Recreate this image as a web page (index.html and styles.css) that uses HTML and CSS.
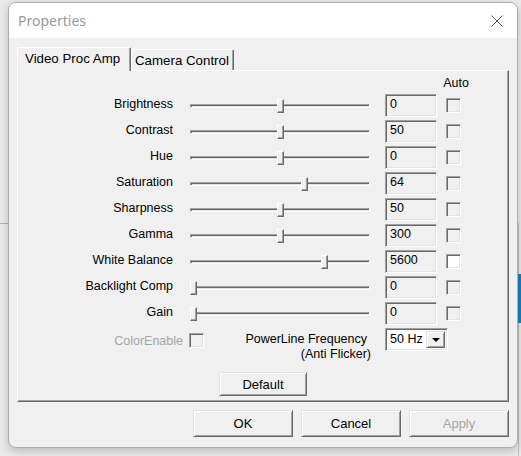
FILE: index.html
```html
<!DOCTYPE html>
<html>
<head>
<meta charset="utf-8">
<link rel="stylesheet" href="styles.css">
</head>
<body>
<div class="bg-line"></div>
<div class="bg-edge"></div>
<div class="bg-blue"></div>
<div class="dialog">
  <div class="titlebar">
    <span class="title">Properties</span>
    <svg class="close" viewBox="0 0 12 12" width="12" height="12"><path d="M0.5 0.5 L11.5 11.5 M11.5 0.5 L0.5 11.5" stroke="#555" stroke-width="1" fill="none"/></svg>
  </div>
  <div class="client">
    <div class="tabs">
      <div class="tab active">Video Proc Amp</div>
      <div class="tab inactive">Camera Control</div>
    </div>
    <div class="panel">
      <div class="grid">
        <div class="auto-head">Auto</div>

        <div class="label">Brightness</div>
        <div class="slider"><div class="track"></div><div class="thumb" style="--v:0.503"></div></div>
        <div class="value">0</div>
        <div class="check"></div>

        <div class="label">Contrast</div>
        <div class="slider"><div class="track"></div><div class="thumb" style="--v:0.503"></div></div>
        <div class="value">50</div>
        <div class="check"></div>

        <div class="label">Hue</div>
        <div class="slider"><div class="track"></div><div class="thumb" style="--v:0.503"></div></div>
        <div class="value">0</div>
        <div class="check"></div>

        <div class="label">Saturation</div>
        <div class="slider"><div class="track"></div><div class="thumb" style="--v:0.64"></div></div>
        <div class="value">64</div>
        <div class="check"></div>

        <div class="label">Sharpness</div>
        <div class="slider"><div class="track"></div><div class="thumb" style="--v:0.503"></div></div>
        <div class="value">50</div>
        <div class="check"></div>

        <div class="label">Gamma</div>
        <div class="slider"><div class="track"></div><div class="thumb" style="--v:0.503"></div></div>
        <div class="value">300</div>
        <div class="check"></div>

        <div class="label">White Balance</div>
        <div class="slider"><div class="track"></div><div class="thumb" style="--v:0.76"></div></div>
        <div class="value">5600</div>
        <div class="check enabled"></div>

        <div class="label">Backlight Comp</div>
        <div class="slider"><div class="track"></div><div class="thumb" style="--v:0"></div></div>
        <div class="value">0</div>
        <div class="check"></div>

        <div class="label">Gain</div>
        <div class="slider"><div class="track"></div><div class="thumb" style="--v:0"></div></div>
        <div class="value">0</div>
        <div class="check"></div>
      </div>

      <div class="extras">
        <div class="color-enable">
          <span class="disabled-text">ColorEnable</span>
          <div class="check small"></div>
        </div>
        <div class="powerline">
          <div class="pl-line1">PowerLine Frequency</div>
          <div>(Anti Flicker)</div>
        </div>
        <div class="combo">
          <span class="combo-text">50 Hz</span>
          <span class="combo-btn"><span class="arrow"></span></span>
        </div>
      </div>

      <div class="default-row">
        <button class="btn default">Default</button>
      </div>
    </div>
    <div class="actions">
      <button class="btn action">OK</button>
      <button class="btn action">Cancel</button>
      <button class="btn action disabled">Apply</button>
    </div>
  </div>
</div>
</body>
</html>
```

FILE: styles.css
```css
* { box-sizing: border-box; }
html, body { margin: 0; padding: 0; }
body {
  width: 521px;
  height: 456px;
  overflow: hidden;
  position: relative;
  background: #ebebeb;
  font-family: "Liberation Sans", Arial, sans-serif;
  font-size: 12.5px;
  color: #000;
}
.bg-line { position: absolute; left: 0; top: 223px; width: 8px; height: 1px; background: #b0b0b0; }
.bg-edge { position: absolute; left: 518px; top: 223px; width: 1px; height: 233px; background: #c4c4c4; }
.bg-blue { position: absolute; left: 518px; top: 274px; width: 3px; height: 49px; background: #0a84c8; }

.dialog {
  position: absolute;
  left: 8px;
  top: 2px;
  width: 510px;
  height: 446px;
  border: 1px solid #acacac;
  border-radius: 8px;
  background: #f0f0f0;
  overflow: hidden;
  box-shadow: 0 3px 10px rgba(0,0,0,0.22);
  display: flex;
  flex-direction: column;
}
.titlebar {
  flex: none;
  height: 35px;
  background: #fff;
  display: flex;
  align-items: center;
  justify-content: space-between;
  padding: 0 14px 0 9px;
}
.title {
  font-family: "Noto Sans", "Open Sans", sans-serif;
  font-size: 14px;
  color: #999;
}
.close { display: block; width: 12px; height: 12px; }

.client {
  flex: 1;
  display: flex;
  flex-direction: column;
  padding: 9px 8px 0 8px;
}
.tabs {
  display: flex;
  align-items: flex-end;
  height: 23px;
  position: relative;
  z-index: 1;
}
.tab {
  font-size: 13.3px;
  line-height: 18px;
  padding-top: 2px;
  background: #f0f0f0;
  border-top: 1px solid #fff;
  border-left: 1px solid #fff;
  border-right: 1px solid #696969;
  box-shadow: inset -1px 0 #a0a0a0;
  border-radius: 2px 2px 0 0;
  white-space: nowrap;
}
.tab.active { width: 114px; height: 24px; margin-bottom: -1px; padding-left: 7px; }
.tab.inactive { width: 103px; height: 21px; padding-left: 3px; }

.panel {
  height: 332px;
  border: 1px solid;
  border-color: #fff #696969 #696969 #fff;
  box-shadow: inset -1px -1px #a0a0a0;
  display: flex;
  flex-direction: column;
}
.grid {
  display: grid;
  grid-template-columns: 155px 197px 67px 24px;
  grid-template-rows: 15px;
  grid-auto-rows: 23px;
  row-gap: 3px;
  padding-top: 5px;
}
.auto-head {
  grid-column: 4;
  justify-self: end;
  margin-right: -8px;
  line-height: 15px;
  white-space: nowrap;
}
.label {
  text-align: right;
  line-height: 21px;
  white-space: nowrap;
}
.slider {
  position: relative;
  margin-left: 17px;
  width: 180px;
  padding-top: 10px;
}
.track {
  height: 4px;
  border-top: 1px solid #a0a0a0;
  border-left: 1px solid #a0a0a0;
  border-bottom: 1px solid #fff;
  border-right: 1px solid #fff;
  box-shadow: inset 1px 1px #696969, inset -1px -1px #e3e3e3;
}
.thumb {
  position: absolute;
  top: 5px;
  left: calc(var(--v) * (100% - 7px));
  width: 7px;
  height: 14px;
  background: #f0f0f0;
  border: 1px solid;
  border-color: #fff #696969 #696969 #fff;
  box-shadow: inset -1px -1px #a0a0a0;
}
.value {
  margin-left: 15px;
  width: 52px;
  height: 23px;
  padding-left: 4px;
  line-height: 19px;
  border: 1px solid;
  border-color: #a0a0a0 #fff #fff #a0a0a0;
  box-shadow: inset 1px 1px #696969, inset -1px -1px #e3e3e3;
}
.check {
  margin-left: 9px;
  align-self: center;
  width: 15px;
  height: 15px;
  background: #f0f0f0;
  border: 1px solid;
  border-color: #a0a0a0 #fff #fff #a0a0a0;
  box-shadow: inset 1px 1px #696969, inset -1px -1px #e3e3e3;
}
.check.enabled { background: #fff; }
.check.small { margin-left: 0; }

.extras {
  display: flex;
  margin-top: 3px;
  height: 34px;
}
.color-enable {
  width: 186px;
  height: 15px;
  margin-top: 5px;
  display: flex;
  justify-content: flex-end;
  align-items: center;
  gap: 6px;
}
.disabled-text { color: #a6a6a6; white-space: nowrap; }
.powerline {
  width: 167px;
  text-align: right;
  line-height: 15px;
  padding-top: 4px;
  white-space: nowrap;
}
.pl-line1 { padding-right: 4px; }
.combo {
  margin-left: 14px;
  width: 63px;
  height: 23px;
  display: flex;
  background: #fff;
  border: 1px solid;
  border-color: #a0a0a0 #fff #fff #a0a0a0;
  box-shadow: inset 1px 1px #696969, inset -1px -1px #e3e3e3;
  padding: 2px;
}
.combo-text { flex: 1; padding-left: 2px; line-height: 17px; margin-top: 0; }
.combo-btn {
  width: 19px;
  height: 17px;
  display: flex;
  align-items: center;
  justify-content: center;
  background: #f0f0f0;
  border: 1px solid;
  border-color: #e3e3e3 #696969 #696969 #e3e3e3;
  box-shadow: inset 1px 1px #fff, inset -1px -1px #a0a0a0;
}
.arrow {
  width: 0;
  height: 0;
  border-left: 4px solid transparent;
  border-right: 4px solid transparent;
  border-top: 4px solid #000;
}

.default-row {
  display: flex;
  justify-content: center;
  margin-top: 10px;
}
.btn {
  font-family: "Liberation Sans", Arial, sans-serif;
  font-size: 13px;
  color: #000;
  background: #f0f0f0;
  border: 1px solid;
  border-color: #e3e3e3 #696969 #696969 #e3e3e3;
  box-shadow: inset 1px 1px #fff, inset -1px -1px #a0a0a0;
  padding: 0;
  margin: 0;
  border-radius: 0;
}
.btn.default { width: 88px; height: 24px; }
.actions {
  display: flex;
  justify-content: flex-end;
  gap: 8px;
  margin-top: 8px;
}
.btn.action { width: 100px; height: 27px; }
.btn.disabled { color: #a6a6a6; }
```
